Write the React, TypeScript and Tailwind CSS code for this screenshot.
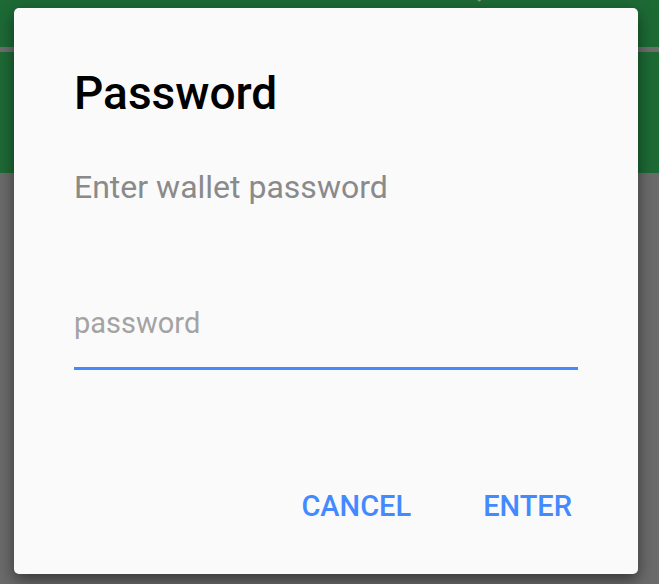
import { useState } from 'react';

export default function App() {
  const [value, setValue] = useState('');

  return (
    <div
      className="relative w-[659px] h-[584px] overflow-hidden bg-[#6b6b6b]"
      style={{ fontFamily: 'Roboto, "Noto Sans", sans-serif' }}
    >
      {/* dimmed screen behind the dialog */}
      <div className="flex flex-col">
        <div className="h-[47px] bg-[#1d6a35] overflow-hidden flex justify-center">
          <span className="-mt-[37px] text-[40px] font-medium tracking-[0.08em] text-white/40 leading-[42px]">
            SCAN WALLET QR
          </span>
        </div>
        <div className="h-[5px] bg-[#6e6e6e]" />
        <div className="h-[121px] bg-[#1d6a35]" />
        <div className="flex-1 bg-[#6b6b6b]" />
      </div>

      {/* dialog */}
      <div className="absolute left-[14px] top-[8px] w-[624px] h-[566px] rounded-[5px] bg-[#fafafa] shadow-[0_6px_16px_rgba(0,0,0,0.5)] flex flex-col pl-[60px] pr-[60px] pt-[58px]">
        <h2 className="text-[46px] leading-[54px] font-medium text-black">Password</h2>
        <p className="mt-[47px] text-[32px] leading-[40px] text-[#8a8a8a]">Enter wallet password</p>

        <div className="mt-[98px] pb-[26px] border-b-[3px] border-[#448aff]">
          <input
            type="password"
            value={value}
            onChange={(e) => setValue(e.target.value)}
            placeholder="password"
            className="w-full bg-transparent outline-none text-[29px] leading-[36px] h-[36px] text-[#222] placeholder:text-[#a3a3a3]"
          />
        </div>

        <div className="mt-[118px] flex justify-end gap-[72px] pr-[6px]">
          <button type="button" className="text-[29px] leading-[36px] font-medium text-[#448aff]">
            CANCEL
          </button>
          <button type="button" className="text-[29px] leading-[36px] font-medium text-[#448aff]">
            ENTER
          </button>
        </div>
      </div>
    </div>
  );
}
